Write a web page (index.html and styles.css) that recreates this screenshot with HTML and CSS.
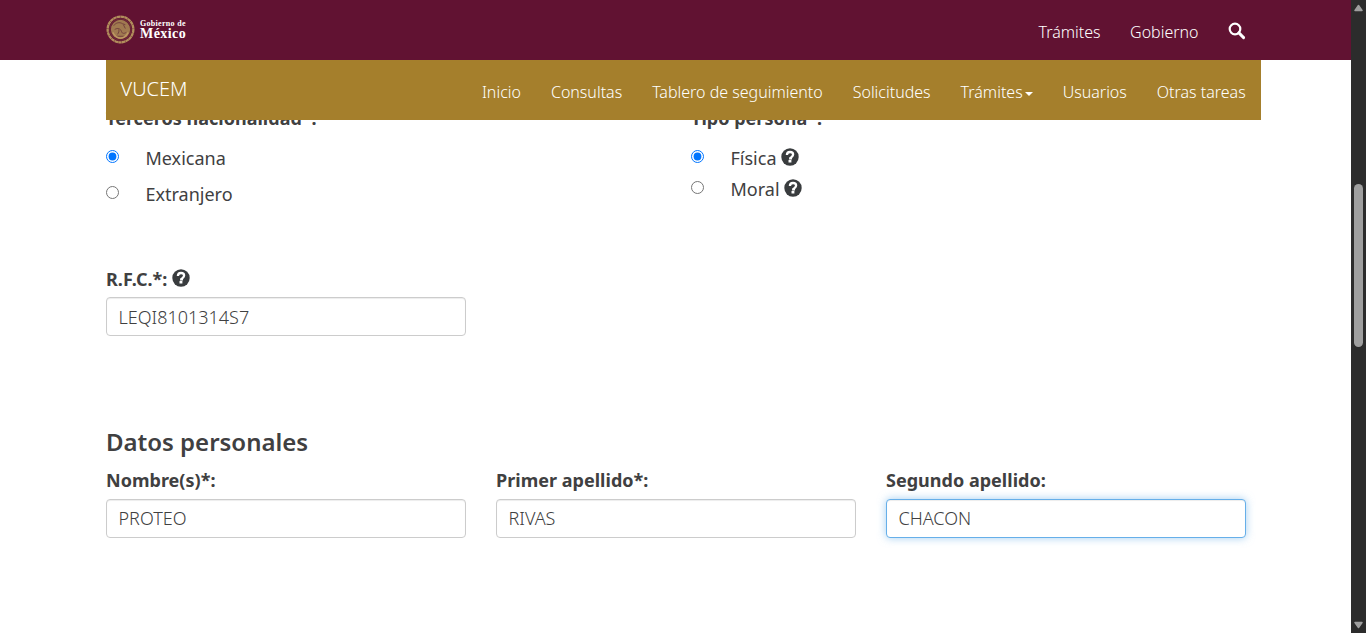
FILE: index.html
```
<!DOCTYPE html>
<html lang="es">
<head>
<meta charset="utf-8">
<title>VUCEM</title>
<link rel="stylesheet" href="styles.css">
</head>
<body>
<svg class="defs" aria-hidden="true">
  <symbol id="help" viewBox="0 0 18 18">
    <circle cx="9" cy="9" r="8.700" fill="#393c3e"/>
    <path d="M5.900 7.100C5.900 4.900 7.200 4 9 4s3.100.9 3.100 2.600c0 1.300-.7 1.800-1.500 2.300-.6.400-.7.600-.7 1.500H8.100" fill="none" stroke="#fff" stroke-width="2.300"/>
    <path d="M7.500 11.900h2.900v2.600H7.500z" fill="#fff"/>
  </symbol>
</svg>
<div class="page">
  <header class="gob">
    <div class="container gob-row">
      <a class="brand">
        <svg class="seal" viewBox="0 0 30 30" fill="none" stroke="#b28e5c">
          <circle cx="15" cy="15" r="10" fill="#a07a50" stroke="none"/>
          <circle cx="15" cy="15" r="13.300" stroke-width="2.400" stroke-dasharray="3.600 .3"/>
          <circle cx="15" cy="15" r="11" stroke="#6e2a38" stroke-width="1.300"/>
          <path d="M8 11c2-3 6-4 9-2l3 1M9 15c3-2 6-1 7 2s3 2 5 1M12 20c1-2 2-3 1-5M18 10l2 4M10 22h9" stroke="#6e3a3c" stroke-width=".9"/>
          <path d="M7 18c2 4 5 6 8 6s6-2 8-6" stroke="#c09a63" stroke-width="1.300"/>
        </svg>
        <span class="brand-text"><span class="brand-top">Gobierno de</span><span class="brand-name">México</span></span>
      </a>
      <nav class="gob-links">
        <a>Trámites</a>
        <a>Gobierno</a>
        <svg class="search" viewBox="0 0 18 18" fill="none" stroke="#fff"><circle cx="7" cy="7" r="5.300" stroke-width="2.200"/><path d="M10.900 10.900l4.700 4.700" stroke-width="2.900" stroke-linecap="round"/></svg>
      </nav>
    </div>
  </header>
  <div class="subnav">
    <a class="subnav-title">VUCEM</a>
    <nav class="subnav-links">
      <a>Inicio</a><a>Consultas</a><a>Tablero de seguimiento</a><a>Solicitudes</a><a>Trámites<i class="caret"></i></a><a>Usuarios</a><a>Otras tareas</a>
    </nav>
  </div>
  <main class="container">
    <div class="choices">
      <fieldset class="group">
        <legend class="label">Terceros nacionalidad*:</legend>
        <label class="option wide"><input type="radio" name="nac" checked><span>Mexicana</span></label>
        <label class="option wide"><input type="radio" name="nac"><span>Extranjero</span></label>
      </fieldset>
      <fieldset class="group">
        <legend class="label">Tipo persona*:</legend>
        <label class="option"><input type="radio" name="tipo" checked><span>Física</span><svg class="help"><use href="#help"/></svg></label>
        <label class="option"><input type="radio" name="tipo"><span>Moral</span><svg class="help"><use href="#help"/></svg></label>
      </fieldset>
    </div>
    <div class="fields rfc">
      <div class="field">
        <label class="label">R.F.C.*: <svg class="help"><use href="#help"/></svg></label>
        <input class="control" type="text" value="LEQI8101314S7">
      </div>
    </div>
    <h4 class="heading">Datos personales</h4>
    <div class="fields personal">
      <div class="field"><label class="label">Nombre(s)*:</label><input class="control" type="text" value="PROTEO"></div>
      <div class="field"><label class="label">Primer apellido*:</label><input class="control" type="text" value="RIVAS"></div>
      <div class="field"><label class="label">Segundo apellido:</label><input class="control focused" type="text" value="CHACON"></div>
    </div>
  </main>
</div>
<div class="scrollbar">
  <svg class="arrow" viewBox="0 0 9 7"><path d="M4.500 1L8 6H1z" fill="#9f9f9f" stroke="#9f9f9f" stroke-width="1.500" stroke-linejoin="round"/></svg>
  <span class="thumb"></span>
  <svg class="arrow" viewBox="0 0 9 7"><path d="M4.500 6L1 1h7z" fill="#9f9f9f" stroke="#9f9f9f" stroke-width="1.500" stroke-linejoin="round"/></svg>
</div>
</body>
</html>
```
FILE: styles.css
```
* { box-sizing: border-box; }
body {
  margin: 0;
  height: 633px;
  display: flex;
  overflow: hidden;
  background: #fff;
  color: #404041;
  font: 18px/26px "Noto Sans", sans-serif;
}
.defs { position: absolute; width: 0; height: 0; }
.page { position: relative; flex: 1; min-width: 0; }
.container { width: 1140px; margin-left: 106px; }
.gob { height: 60px; background: #611232; color: #fff; }
.gob-row { height: 60px; display: flex; justify-content: space-between; }
.brand { display: flex; align-items: center; gap: 5px; padding-bottom: 2px; }
.seal { width: 29px; height: 29px; }
.brand-text { display: flex; flex-direction: column; font-family: "Liberation Serif", serif; font-weight: 700; }
.brand-top { font-size: 8px; line-height: 8px; letter-spacing: .3px; }
.brand-name { font-size: 14px; line-height: 11px; letter-spacing: .45px; }
.gob-links { display: flex; gap: 29.500px; padding-top: 19px; font-size: 16px; font-weight: 300; }
.search { width: 18px; height: 18px; margin-top: 3px; }
.subnav {
  position: absolute;
  z-index: 2;
  top: 60px;
  left: 106px;
  width: 1155px;
  height: 60px;
  padding: 0 15.300px 0 14.500px;
  display: flex;
  justify-content: space-between;
  background: #a57f2c;
  color: #fff;
  font-weight: 300;
}
.subnav-title { font-size: 20px; padding-top: 16px; }
.subnav-links { display: flex; gap: 30px; padding-top: 19px; font-size: 16px; }
.caret { display: inline-block; margin-left: 2px; vertical-align: middle; border: 4px solid transparent; border-top-color: #fff; border-bottom: 0; }
.choices { display: grid; grid-template-columns: 1fr 1fr; gap: 30px; padding-top: 45px; }
.group { margin: 0; padding: 0; border: 0; }
.label { display: block; padding: 0; font-size: 18px; font-weight: 700; letter-spacing: .02px; }
.option { display: flex; align-items: flex-start; height: 31px; padding-top: 14px; }
.option.wide { height: 36px; }
.option input { margin: 5px 26.500px 0 0; width: 13px; height: 13px; flex: none; }
.help { width: 18px; height: 18px; }
.option .help { margin: 3px 0 0 4.500px; }
.label .help { vertical-align: -1px; }
.fields { display: grid; grid-template-columns: repeat(3, 1fr); gap: 30px; }
.rfc { margin-top: 63px; height: 70px; }
.control {
  display: block;
  width: 100%;
  height: 39px;
  margin-top: 5px;
  padding: 6px 11.500px;
  border: 1px solid #ccc;
  border-radius: 4px;
  box-shadow: inset 0 1px 1px rgba(0,0,0,.075);
  color: #404041;
  font: 300 18px/25px "Noto Sans", sans-serif;
  outline: 0;
}
.personal .control { margin-top: 6px; padding-top: 5px; padding-bottom: 7px; }
.control.focused { border-color: #66afe9; box-shadow: inset 0 1px 1px rgba(0,0,0,.075), 0 0 8px rgba(102,175,233,.6); }
.heading { margin: 90px 0 9px; font-size: 24px; line-height: 32px; font-weight: 600; letter-spacing: -.02px; }
.scrollbar { width: 15px; height: 633px; padding: 4px 0 4px; display: flex; flex-direction: column; align-items: center; justify-content: space-between; background: #2c2c2c; }
.arrow { width: 9px; height: 8px; }
.thumb { width: 9px; height: 163px; margin-bottom: 103px; border-radius: 5px; background: #9f9f9f; }
```
